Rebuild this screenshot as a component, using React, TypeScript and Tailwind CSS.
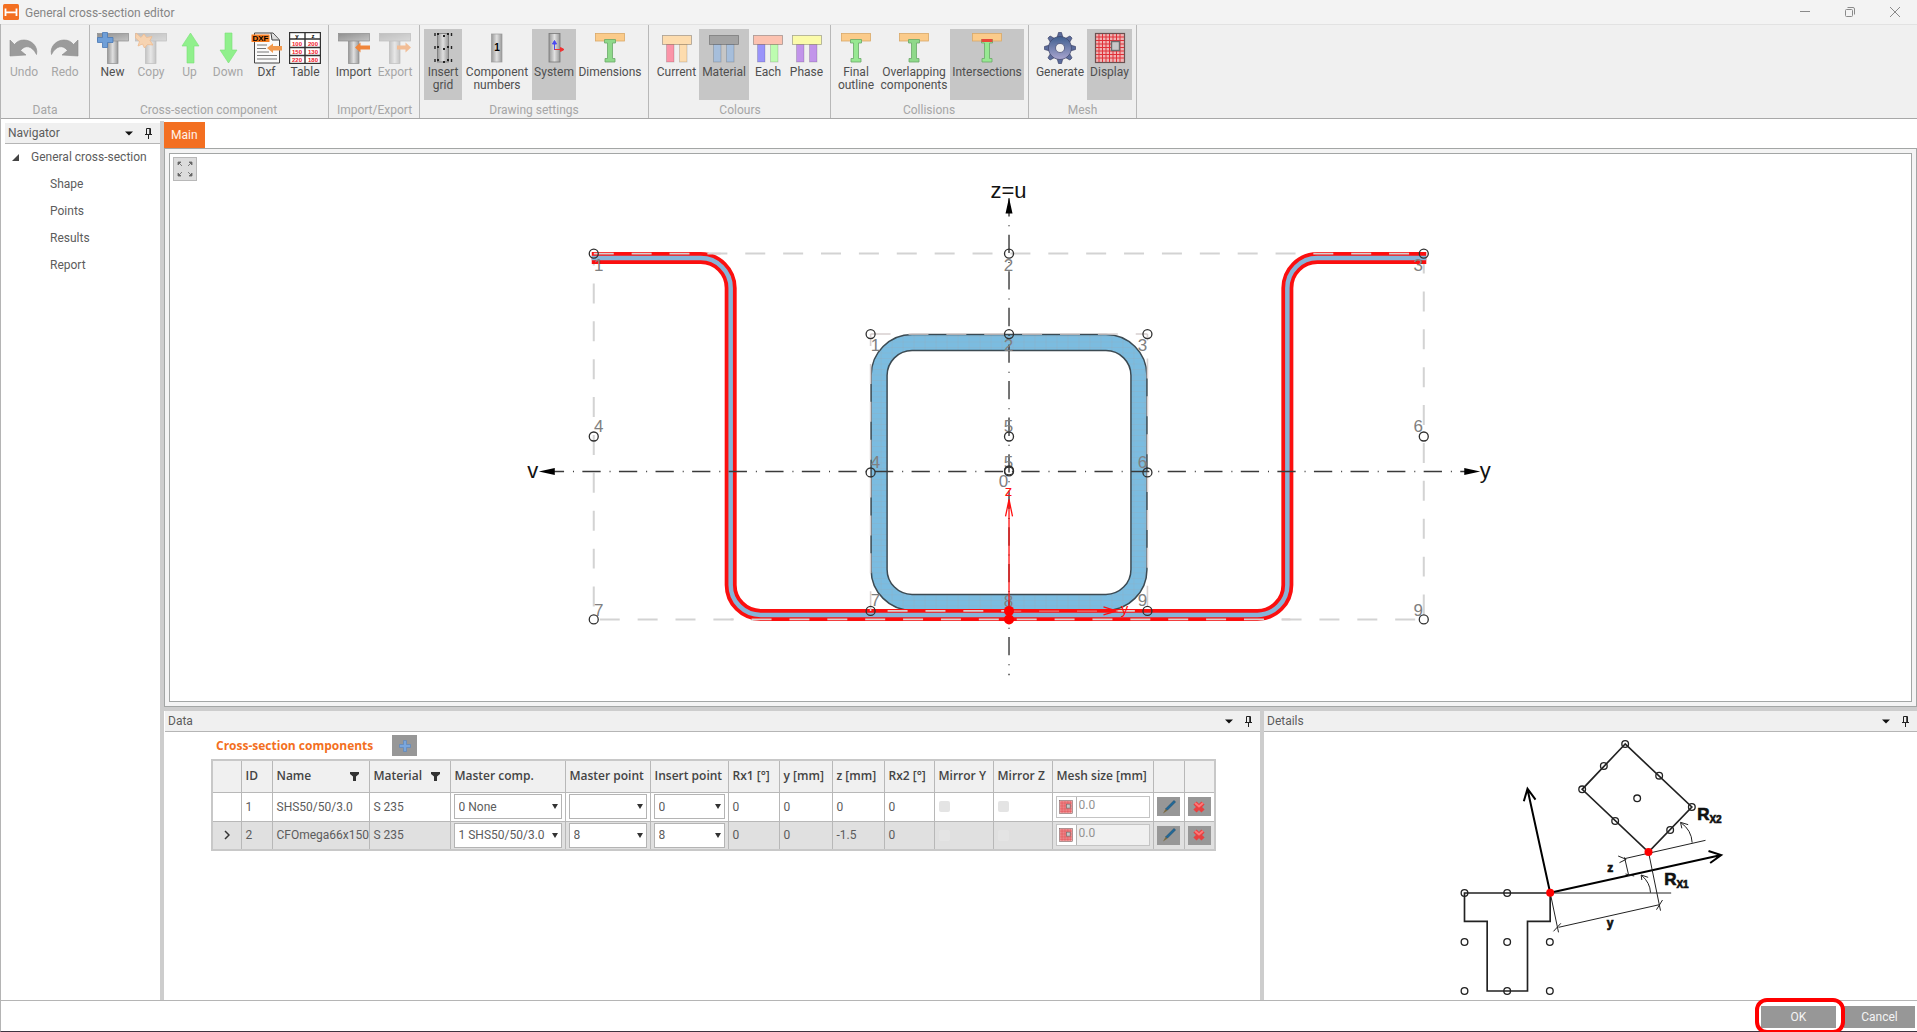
import type { ReactNode } from "react"
import { useState } from "react"
import clsx from "clsx"

const tones: Record<string, string> = {
  orange: "#fbcb8a",
  green: "#97e892",
}

function Icon({ children, faded }: { children: ReactNode; faded?: boolean }) {
  return (
    <svg viewBox="0 0 32 32" className={clsx("h-8 w-8 shrink-0", faded && "opacity-50")} aria-hidden="true">
      {children}
    </svg>
  )
}

function SteelGradient({ id }: { id: string }) {
  return (
    <linearGradient id={id} x1="0" x2="1" y1="0" y2="0">
      <stop offset="0" stopColor="#989898" />
      <stop offset="0.5" stopColor="#e0e0e0" />
      <stop offset="1" stopColor="#989898" />
    </linearGradient>
  )
}

function UndoIcon({ flip }: { flip?: boolean }) {
  return (
    <Icon>
      <path
        d="M2 8V24L18 23L12.500 18.500C17 12.500 24 13.500 28.500 22.500C30.500 14 23 8 16 8C11.500 8 9 9.500 6.500 12.500Z"
        fill="#9b9b9b"
        stroke="#8a8a8a"
        strokeWidth="0.6"
        transform={flip ? "translate(31 0) scale(-1 1)" : undefined}
      />
    </Icon>
  )
}

function TeeShape({ id }: { id: string }) {
  return (
    <>
      <defs>
        <SteelGradient id={id} />
        <linearGradient id={id + "-bar"} x1="0" x2="1" y1="0" y2="1">
          <stop offset="0" stopColor="#8f8f8f" />
          <stop offset="1" stopColor="#c4c4c4" />
        </linearGradient>
      </defs>
      <rect x="10.5" y="4" width="10.5" height="27.5" fill={`url(#${id})`} stroke="#8c8c8c" strokeWidth="0.7" />
      <rect x="0.5" y="1.500" width="31" height="7.500" fill={`url(#${id}-bar)`} stroke="#8c8c8c" strokeWidth="0.7" />
    </>
  )
}

function NewIcon() {
  return (
    <Icon>
      <TeeShape id="tee-new" />
      <path d="M5.500 0.500H10.500V5.500H16V10.500H10.500V15.500H5.500V10.500H0.500V5.500H5.500Z" fill="#6f9fd8" stroke="#4a78b5" strokeWidth="0.8" />
    </Icon>
  )
}

function CopyIcon() {
  return (
    <Icon faded>
      <TeeShape id="tee-copy" />
      <path d="M9 2L11.500 5.500L17 4.500L15 8.500L18 13L12.500 12.500L9.500 16L7.500 12L3 14L4.500 9.500L0.500 6L1 1L6 5.500Z" fill="#fdb873" stroke="#f0862e" strokeWidth="0.8" />
    </Icon>
  )
}

function VerticalArrow({ down }: { down?: boolean }) {
  return (
    <Icon>
      <path
        d="M16.500 1L25 14H20V31H13V14H8Z"
        fill="#90f08c"
        stroke="#7be077"
        strokeWidth="0.6"
        transform={down ? "rotate(180 16.5 16)" : undefined}
      />
    </Icon>
  )
}

function DxfIcon() {
  return (
    <Icon>
      <path d="M3.500 1H22L28.500 8V31H3.500Z" fill="#fafafa" stroke="#444" />
      <path d="M20 1L21 8H28" fill="#ddd" stroke="#444" />
      <path d="M6 13H16M6 16.500H15M6 20H18M6 23.500H26M6 27H26" stroke="#777" />
      <rect x="0.500" y="2.500" width="18" height="7.500" fill="#f47b20" />
      <text x="9.500" y="9" textAnchor="middle" fontSize="8" fontWeight="700" fill="#000" fontFamily="Liberation Sans, sans-serif">
        DXF
      </text>
      <path d="M16 16L22 11.500V14H31V18.500H22V21Z" fill="#f29a4e" />
    </Icon>
  )
}

function TableIcon() {
  const rows = [
    ["100", "200"],
    ["150", "130"],
    ["220", "180"],
  ]
  return (
    <Icon>
      <rect x="0.500" y="0.500" width="31" height="31" fill="#fff" stroke="#333" strokeWidth="1.400" />
      <path d="M16 0V32M0 7H32M0 15.500H32M0 23.500H32" stroke="#333" strokeWidth="1.400" />
      <g fontSize="6" fontWeight="700" textAnchor="middle" fontFamily="Liberation Sans, sans-serif">
        <text x="8" y="5.500">y</text>
        <text x="24" y="5.500">z</text>
        {rows.map(([y, z], i) => (
          <g key={y} fill="#f0202c">
            <text x="8" y={13.5 + i * 8.2}>{y}</text>
            <text x="24" y={13.5 + i * 8.2}>{z}</text>
          </g>
        ))}
      </g>
    </Icon>
  )
}

function ImportIcon({ out }: { out?: boolean }) {
  return (
    <Icon faded={out}>
      <TeeShape id={out ? "tee-export" : "tee-import"} />
      {out ? (
        <path d="M32 15.500L26.500 10.500V13.500H18V17.500H26.500V20.500Z" fill="#f58b3c" />
      ) : (
        <path d="M17 15.500L22.500 10.500V13.500H32V17.500H22.500V20.500Z" fill="#f0853a" />
      )}
    </Icon>
  )
}

function InsertGridIcon() {
  return (
    <Icon>
      <defs>
        <SteelGradient id="steel-grid" />
      </defs>
      <rect x="10.500" y="1.500" width="11" height="28.500" fill="url(#steel-grid)" stroke="#777" strokeWidth="0.8" />
      {[3, 16, 29].map((y) => (
        <path key={y} d={`M10 ${y - 2}h2v2h-2zM20 ${y - 2}h2v2h-2zM16 ${y}h2v2h-2z`} fill="#222" />
      ))}
      <path d="M8 1v3M24.500 1v3M8 14v3M24.500 14v3M8 27v3M24.500 27v3" stroke="#222" strokeWidth="1.400" />
    </Icon>
  )
}

function ComponentNumberIcon() {
  return (
    <Icon>
      <defs>
        <SteelGradient id="steel-number" />
      </defs>
      <rect x="10.500" y="2" width="10.500" height="28" fill="url(#steel-number)" stroke="#9a9a9a" strokeWidth="0.7" />
      <text x="16" y="19" textAnchor="middle" fontSize="10" fontWeight="700" fontFamily="Liberation Sans, sans-serif">
        1
      </text>
    </Icon>
  )
}

function SystemIcon() {
  return (
    <Icon>
      <defs>
        <SteelGradient id="steel-system" />
      </defs>
      <rect x="11" y="1.500" width="11" height="28.500" fill="url(#steel-system)" stroke="#777" strokeWidth="0.8" />
      <path d="M16.500 18V9.500M14.500 12L16.500 8.500L18.500 12Z" stroke="#4a4af0" fill="#4a4af0" />
      <path d="M16.500 17.500H25M22.500 15.500L26 17.500L22.500 19.500Z" stroke="#f03030" fill="#f03030" />
    </Icon>
  )
}

function BeamIcon({ hit, merged }: { hit?: boolean; merged?: boolean }) {
  return (
    <Icon>
      <rect x="1.500" y="1.500" width="29" height="7.500" fill={tones.orange} stroke="#d9a868" strokeWidth="0.8" />
      <path
        d="M10.500 7.500H21.500V11H18.500V26.500H21V30H11V26.500H13.500V11H10.500Z"
        fill={merged ? "#8fd98a" : tones.green}
        stroke="#6aa868"
        strokeWidth="0.8"
      />
      {hit && <rect x="10.500" y="7" width="11" height="3" fill="#e8483a" />}
    </Icon>
  )
}

function ColourIcon({ top, left, right }: { top: string; left: string; right: string }) {
  return (
    <Icon>
      <rect x="5.500" y="12" width="7.500" height="18" fill={left} stroke="#00000030" strokeWidth="0.8" />
      <rect x="18.500" y="12" width="7.500" height="18" fill={right} stroke="#00000030" strokeWidth="0.8" />
      <rect x="1.500" y="3.500" width="29" height="9" fill={top} stroke="#00000050" strokeWidth="0.8" />
    </Icon>
  )
}

function GearIcon() {
  return (
    <Icon>
      <defs>
        <linearGradient id="gear" x1="0" x2="0" y1="0" y2="1">
          <stop offset="0" stopColor="#3f5f8f" />
          <stop offset="1" stopColor="#a9a5cf" />
        </linearGradient>
      </defs>
      <g fill="url(#gear)" stroke="#3d4468" strokeWidth="0.7">
        {[0, 45, 90, 135, 180, 225, 270, 315].map((a) => (
          <path key={a} d="M13 6L14.500 0.500H17.500L19 6Z" fill="#5b6c9c" transform={`rotate(${a} 16 16)`} />
        ))}
        <path d="M16 4.500A11.500 11.500 0 1 1 15.900 4.500ZM16 11.500A4.500 4.500 0 1 0 16.100 11.500Z" fillRule="evenodd" />
      </g>
    </Icon>
  )
}

function MeshShape() {
  return (
    <>
      <rect x="1.500" y="1.500" width="29" height="29" fill="#f0b4b4" stroke="#6b5050" strokeWidth="1.200" />
      <path
        d="M5 2V30M8.500 2V30M12 2V30M15.500 2V30M19 2V30M22.500 2V30M26 2V30M2 5H30M2 8.500H30M2 12H30M2 15.500H30M2 19H30M2 22.500H30M2 26H30"
        stroke="#e03038"
        strokeWidth="1"
      />
      <rect x="17.500" y="9.500" width="8" height="9" fill="#c8c8c8" stroke="#6b6b6b" strokeWidth="1.400" />
    </>
  )
}

type Tool = { label: string; width: string; icon: ReactNode; disabled?: boolean; active?: boolean }
type Group = { title: string; pad: string; tools: Tool[] }

const groups: Group[] = [
  {
    title: "Data",
    pad: "px-[3px]",
    tools: [
      { label: "Undo", width: "w-[40px]", icon: <UndoIcon />, disabled: true },
      { label: "Redo", width: "w-[42px]", icon: <UndoIcon flip />, disabled: true },
    ],
  },
  {
    title: "Cross-section component",
    pad: "pl-[3px] pr-1",
    tools: [
      { label: "New", width: "w-[39px]", icon: <NewIcon /> },
      { label: "Copy", width: "w-[38px]", icon: <CopyIcon />, disabled: true },
      { label: "Up", width: "w-[39px]", icon: <VerticalArrow />, disabled: true },
      { label: "Down", width: "w-[38px]", icon: <VerticalArrow down />, disabled: true },
      { label: "Dxf", width: "w-[39px]", icon: <DxfIcon /> },
      { label: "Table", width: "w-[38px]", icon: <TableIcon /> },
    ],
  },
  {
    title: "Import/Export",
    pad: "pl-1 pr-[3px]",
    tools: [
      { label: "Import", width: "w-[41px]", icon: <ImportIcon /> },
      { label: "Export", width: "w-[42px]", icon: <ImportIcon out />, disabled: true },
    ],
  },
  {
    title: "Drawing settings",
    pad: "px-1",
    tools: [
      { label: "Insert\ngrid", width: "w-[38px]", icon: <InsertGridIcon />, active: true },
      { label: "Component\nnumbers", width: "w-[70px]", icon: <ComponentNumberIcon /> },
      { label: "System", width: "w-[44px]", icon: <SystemIcon />, active: true },
      { label: "Dimensions", width: "w-[68px]", icon: <BeamIcon merged /> },
    ],
  },
  {
    title: "Colours",
    pad: "pl-[5px] pr-1",
    tools: [
      { label: "Current", width: "w-[45px]", icon: <ColourIcon top="#fddcae" left="#fb94a8" right="#fddcae" /> },
      { label: "Material", width: "w-[50px]", icon: <ColourIcon top="#a3a3a3" left="#a6bedb" right="#a6bedb" />, active: true },
      { label: "Each", width: "w-[38px]", icon: <ColourIcon top="#fcc2b0" left="#9a94fa" right="#bdfcb0" /> },
      { label: "Phase", width: "w-[39px]", icon: <ColourIcon top="#fbfbaa" left="#c294ea" right="#c294ea" /> },
    ],
  },
  {
    title: "Collisions",
    pad: "pl-[3px] pr-1",
    tools: [
      { label: "Final\noutline", width: "w-[44px]", icon: <BeamIcon /> },
      { label: "Overlapping\ncomponents", width: "w-[72px]", icon: <BeamIcon merged /> },
      { label: "Intersections", width: "w-[74px]", icon: <BeamIcon hit />, active: true },
    ],
  },
  {
    title: "Mesh",
    pad: "px-1",
    tools: [
      { label: "Generate", width: "w-[54px]", icon: <GearIcon /> },
      { label: "Display", width: "w-[45px]", icon: <Icon><MeshShape /></Icon>, active: true },
    ],
  },
]

function TitleBar() {
  return (
    <header className="flex h-6 shrink-0 items-center bg-[#f3f3f3] pl-[3px]">
      <svg viewBox="0 0 16 16" className="h-4 w-4" aria-hidden="true">
        <rect width="16" height="16" rx="1.500" fill="#f36f21" />
        <path d="M2.500 4.500V12M13.500 4.500V12M3 8.300H13" stroke="#fff" strokeWidth="1.800" />
      </svg>
      <h1 className="ml-1.5 grow pt-0.5 text-[#858585]">General cross-section editor</h1>
      <div className="flex text-[#8a8a8a]">
        <button aria-label="Minimize" className="flex h-6 w-[45px] items-center justify-center">
          <svg viewBox="0 0 10 10" className="h-2.5 w-2.5"><path d="M0 4.500H10" stroke="currentColor" /></svg>
        </button>
        <button aria-label="Restore" className="flex h-6 w-[46px] items-center justify-center">
          <svg viewBox="0 0 10 10" className="h-2.5 w-2.5" fill="none" stroke="currentColor">
            <rect x="0.5" y="2.5" width="7" height="7" rx="1" />
            <path d="M2.5 0.5H8Q9.500 0.500 9.500 2V7.500" />
          </svg>
        </button>
        <button aria-label="Close" className="flex h-6 w-[44px] items-center justify-center">
          <svg viewBox="0 0 10 10" className="h-2.5 w-2.5"><path d="M0 0L10 10M10 0L0 10" stroke="currentColor" /></svg>
        </button>
      </div>
    </header>
  )
}

function Ribbon() {
  return (
    <div className="flex h-[95px] shrink-0 border-t border-b border-t-[#e2e2e2] border-b-[#a8a8a8] bg-[#f0f0f0]">
      {groups.map((group) => (
        <section key={group.title} className={clsx("flex flex-col border-r border-[#b8b8b8] pt-1", group.pad)}>
          <div className="flex">
            {group.tools.map((tool) => (
              <button
                key={tool.label}
                disabled={tool.disabled}
                className={clsx(
                  "flex h-[71px] flex-col items-center pt-[3px] leading-[13px] whitespace-pre",
                  tool.width,
                  tool.active && "bg-[#c6c6c6]",
                  tool.disabled ? "text-[#a6a6a6]" : "text-[#4f4f4f]",
                )}
              >
                {tool.icon}
                <span className="mt-0.5">{tool.label}</span>
              </button>
            ))}
          </div>
          <h2 className="pt-px text-center leading-[18px] text-[#a6a6a6]">{group.title}</h2>
        </section>
      ))}
    </div>
  )
}

function PaneHeader({ title }: { title: string }) {
  return (
    <div className="flex h-[21px] shrink-0 items-center border-b border-[#b5b5b5] bg-[#f0f0f0] pr-[7px] pl-[3px] text-[#5c5c5c]">
      <h2 className="grow">{title}</h2>
      <button aria-label={`${title} options`} className="mr-[11px]">
        <svg viewBox="0 0 8 5" className="h-[5px] w-2"><path d="M0 0.500H8L4 4.500Z" fill="#111" /></svg>
      </button>
      <button aria-label={`Pin ${title}`}>
        <svg viewBox="0 0 9 11" className="h-[11px] w-[9px]" fill="none" stroke="#222">
          <path d="M2.500 6.500V0.500H6.500V6.500M1 6.500H8M4.500 7V11" />
          <path d="M6 1V6" strokeWidth="1.500" />
        </svg>
      </button>
    </div>
  )
}

function Navigator() {
  return (
    <nav className="flex w-[159px] shrink-0 flex-col pt-1 pl-1">
      <PaneHeader title="Navigator" />
      <div className="flex h-[26px] items-center pl-[7px] text-[#5c5c5c]">
        <svg viewBox="0 0 7 7" className="mr-3 h-[7px] w-[7px]"><path d="M7 0V7H0Z" fill="#444" /></svg>
        <a href="#general">General cross-section</a>
      </div>
      <ul className="text-[#5c5c5c]">
        {["Shape", "Points", "Results", "Report"].map((item) => (
          <li key={item} className="flex h-[27px] items-center pl-[45px]">
            <a href={`#${item.toLowerCase()}`}>{item}</a>
          </li>
        ))}
      </ul>
    </nav>
  )
}

const CX = 1008.5
const omega = "M591 257.500H700A30 30 0 0 1 730 287.500V584.500A30 30 0 0 0 760 614.500H1257A30 30 0 0 0 1287 584.500V287.500A30 30 0 0 1 1317 257.500H1426"

const nodes = [
  [593, 253], [CX, 253], [1423.5, 253], [593, 436], [CX, 436], [1423.5, 436], [593, 619], [1423.5, 619],
  [870, 333.5], [CX, 333.5], [1147, 333.5], [870, 472], [CX, 471], [CX, 470], [1147, 472], [870, 610.5], [1147, 610.5],
]

const nodeLabels: [string, number, number][] = [
  ["1", 598, 270], ["2", 1008, 270], ["3", 1418, 270],
  ["4", 598, 432], ["5", 1008, 432], ["6", 1418, 432],
  ["7", 598, 616], ["8", 1008, 607], ["9", 1418, 616],
  ["1", 875, 350], ["2", 1008, 350], ["3", 1142, 350],
  ["4", 875, 468], ["5", 1008, 468], ["6", 1142, 468],
  ["7", 875, 606], ["9", 1142, 606], ["0", 1003, 487],
]

function SectionDrawing() {
  return (
    <svg viewBox="169 154 1742 546" className="h-full w-full" fontFamily="Liberation Sans, Arial, sans-serif" role="img" aria-label="Cross-section">
      <defs>
        <pattern id="mesh" width="11" height="5.500" patternUnits="userSpaceOnUse">
          <path d="M0 0H11M0 0V5.500" stroke="#9aa6ae" strokeWidth="0.700" fill="none" opacity="0.600" />
        </pattern>
      </defs>

      <g fill="none" stroke="#d3d3d3" strokeWidth="2" strokeDasharray="20 17.900">
        <path d="M593 253H1423.500" />
        <path d="M593 253V619" strokeDashoffset="8" />
        <path d="M1423.500 253V619" />
        <path d="M599 619H1423.500" />
      </g>

      {/* square hollow section */}
      <rect x="878.5" y="342" width="260" height="260" rx="33" fill="none" stroke="#7bbce0" strokeWidth="16" />
      <rect x="878.5" y="342" width="260" height="260" rx="33" fill="none" stroke="url(#mesh)" strokeWidth="16" />
      <rect x="870.5" y="334" width="276" height="276" rx="41" fill="none" stroke="#3c4a52" strokeWidth="1.500" />
      <rect x="886.5" y="350" width="244" height="244" rx="25" fill="none" stroke="#3c4a52" strokeWidth="1.500" />

      {/* omega profile */}
      <path d={omega} fill="none" stroke="#fb0f0f" strokeWidth="12" />
      <path d={omega} fill="none" stroke="#86b4d8" strokeWidth="4.500" />

      <g fill="none" stroke="#d8d0d0" strokeWidth="1.600" strokeDasharray="20 17.900">
        <path d="M593 253H720" />
        <path d="M1313 253H1423.500" />
        <path d="M730 619H1290" strokeDashoffset="17" />
        <path d="M870 333.500H1147" />
        <path d="M870 333.500V610.500" strokeDashoffset="8" />
        <path d="M1147 333.500V610.500" strokeDashoffset="13.500" />
        <path d="M887 610.500H1147" />
      </g>

      {/* principal axes */}
      <g stroke="#3a3a3a" strokeWidth="1.400" strokeDasharray="18.300 8.900 1 8.400">
        <path d="M1008.500 197.500V675" />
        <path d="M545 471H1474" />
      </g>
      <path d="M1008.500 197L1012 213H1005ZM538 471L554 467.500V474.500ZM1480 471L1464 467.500V474.500Z" fill="#000" />
      <g fontSize="22" textAnchor="middle" fill="#111">
        <text x="1008" y="197">z=u</text>
        <text x="532" y="478">v</text>
        <text x="1485" y="478">y</text>
      </g>

      <g fontSize="17" textAnchor="middle" fill="#808080">
        {nodeLabels.map(([label, x, y], i) => (
          <text key={i} x={x} y={y}>{label}</text>
        ))}
      </g>
      <g fill="none" stroke="#2f2f2f" strokeWidth="1.300">
        {nodes.map(([x, y], i) => (
          <circle key={i} cx={x} cy={y} r="4.500" />
        ))}
      </g>

      {/* local axes */}
      <g fill="none" stroke="#ff1010" strokeWidth="1.300">
        <path d="M1008.500 610.500V499M1005 516L1008.500 499L1012 516" />
        <path d="M1008.500 610.500H1116M1103 606.500L1116 610.500L1103 614.500" />
      </g>
      <circle cx={CX} cy="610.5" r="5" fill="#ff0000" />
      <circle cx={CX} cy="619" r="5" fill="#ff0000" />
      <g fontSize="15" textAnchor="middle" fill="#ff1010">
        <text x="1008" y="496">z</text>
        <text x="1124" y="614">y</text>
      </g>
    </svg>
  )
}

function DetailsDrawing() {
  const plain = [[105, 579], [233, 579], [105, 726], [233, 726], [361, 726], [105, 873], [233, 873], [361, 873]]
  const rotated = [[587, 132], [523, 198], [458, 268], [557, 363], [623, 295], [689, 227], [787, 321], [722, 390]]
  return (
    <svg viewBox="-495 96 1956 804" className="h-full w-full" fill="none" stroke="#222" fontFamily="Liberation Sans, Arial, sans-serif" role="img" aria-label="Component placement">
      <path d="M105 579H362V664H294V873H173V664H105Z" strokeWidth="5" />
      <path d="M587 132L458 268L657 456L787 321Z" strokeWidth="5" />
      <g strokeWidth="4">
        {plain.concat(rotated).map(([x, y], i) => (
          <circle key={i} cx={x} cy={y} r="10" />
        ))}
      </g>
      <g stroke="#000" strokeWidth="6">
        <path d="M362 578L294 268M283 304L294 266L318 299" />
        <path d="M362 578L872 466M837 453L875 465L842 489" />
      </g>
      <g strokeWidth="3">
        <path d="M362 579H725M362 578L387 697M657 456L693 632M387 682L690 614M372 694L394 670M681 629L699 600" />
        <path d="M585 476L828 421M585 472L598 528M566 468L590 478L570 488M588 522L614 528" />
        <path d="M663 578Q662 548 636 526M637 540L635 525L656 532" />
        <path d="M788 428Q786 390 754 368M757 385L753 367L776 374" />
      </g>
      <circle cx="362" cy="578" r="12" fill="#ff0000" stroke="none" />
      <circle cx="657" cy="456" r="12" fill="#ff0000" stroke="none" />
      <g fill="#111" stroke="#111" strokeWidth="2" fontWeight="700">
        <text x="803" y="360" fontSize="51">R<tspan dy="9" fontSize="30">X2</tspan></text>
        <text x="704" y="554" fontSize="51">R<tspan dy="9" fontSize="30">X1</tspan></text>
        <text x="533" y="517" fontSize="36">z</text>
        <text x="532" y="682" fontSize="36">y</text>
      </g>
    </svg>
  )
}

function Dropdown({ label, value, options }: { label: string; value: string; options: string[] }) {
  return (
    <div className="relative mx-[3px]">
      <select
        aria-label={label}
        defaultValue={value}
        className="block h-[25px] w-full appearance-none border border-[#b4b4b4] bg-white pl-1 text-[#5c5c5c] outline-none"
      >
        {options.map((option) => (
          <option key={option}>{option}</option>
        ))}
      </select>
      <svg viewBox="0 0 6 5" className="pointer-events-none absolute top-[10px] right-1 h-[5px] w-1.5">
        <path d="M0 0H6L3 5Z" fill="#333" />
      </svg>
    </div>
  )
}

const columns = [
  ["", "w-[29px]"], ["ID", "w-[31px]"], ["Name", "w-[97px]"], ["Material", "w-[81px]"], ["Master comp.", "w-[115px]"],
  ["Master point", "w-[85px]"], ["Insert point", "w-[78px]"], ["Rx1 [°]", "w-[51px]"], ["y [mm]", "w-[53px]"],
  ["z [mm]", "w-[52px]"], ["Rx2 [°]", "w-[50px]"], ["Mirror Y", "w-[59px]"], ["Mirror Z", "w-[59px]"],
  ["Mesh size [mm]", "w-[101px]"], ["", "w-[31px]"], ["", "w-[31px]"],
]

const components = [
  { id: 1, name: "SHS50/50/3.0", material: "S 235", master: "0 None", masterPoint: "", insertPoint: "0", y: "0", z: "0" },
  { id: 2, name: "CFOmega66x150", material: "S 235", master: "1 SHS50/50/3.0", masterPoint: "8", insertPoint: "8", y: "0", z: "-1.5" },
]

const points = ["", "0", "1", "2", "3", "4", "5", "6", "7", "8", "9"]

function ComponentsTable() {
  const [selected, setSelected] = useState(2)
  return (
    <table className="w-[1003px] table-fixed border-collapse border-2 border-[#c8c8c8] text-left text-[#5c5c5c]">
      <thead>
        <tr className="h-8 bg-[#f0f0f0] font-['Open_Sans',sans-serif] text-[#444]">
          {columns.map(([name, width], i) => (
            <th key={i} className={clsx("border border-[#b8b8b8] pl-1 font-semibold whitespace-nowrap", width)}>
              <div className="flex items-center justify-between">
                {name}
                {(name === "Name" || name === "Material") && (
                  <button aria-label={`Filter ${name}`} className="mr-2.5">
                    <svg viewBox="0 0 9 9" className="h-[9px] w-[9px]"><path d="M0 0H9V2L6 4.500V9H3V4.500L0 2Z" fill="#333" /></svg>
                  </button>
                )}
              </div>
            </th>
          ))}
        </tr>
      </thead>
      <tbody>
        {components.map((row) => {
          const active = row.id === selected
          const cell = "border border-[#b8b8b8] pl-1 whitespace-nowrap"
          return (
            <tr key={row.id} className={clsx("h-[29px]", active && "bg-[#e0e0e0]")} onClick={() => setSelected(row.id)}>
              <td className={cell}>
                {active && (
                  <svg viewBox="0 0 6 10" className="ml-[7px] h-2.5 w-1.5"><path d="M1 1L5 5L1 9" fill="none" stroke="#333" strokeWidth="1.500" /></svg>
                )}
              </td>
              <td className={cell}>{row.id}</td>
              <td className={cell}>{row.name}</td>
              <td className={cell}>{row.material}</td>
              <td className="border border-[#b8b8b8]">
                <Dropdown label="Master component" value={row.master} options={["0 None", "1 SHS50/50/3.0"]} />
              </td>
              <td className="border border-[#b8b8b8]">
                <Dropdown label="Master point" value={row.masterPoint} options={points} />
              </td>
              <td className="border border-[#b8b8b8]">
                <Dropdown label="Insert point" value={row.insertPoint} options={points} />
              </td>
              <td className={cell}>0</td>
              <td className={cell}>{row.y}</td>
              <td className={cell}>{row.z}</td>
              <td className={cell}>0</td>
              {["Mirror Y", "Mirror Z"].map((label) => (
                <td key={label} className={cell}>
                  <input type="checkbox" disabled aria-label={label} className="block h-[11px] w-[11px] appearance-none rounded-xs bg-[#e4e4e4]" />
                </td>
              ))}
              <td className="border border-[#b8b8b8] px-[3px]">
                <div className="flex h-[22px] border border-[#c4c4c4]">
                  <button aria-label="Default mesh size" className="flex w-5 shrink-0 items-center justify-center border-r border-[#b4b4b4] bg-white">
                    <svg viewBox="0 0 32 32" className="h-3.5 w-3.5"><MeshShape /></svg>
                  </button>
                  <input
                    disabled
                    defaultValue="0.0"
                    aria-label="Mesh size"
                    className={clsx("w-full min-w-0 pb-1 pl-0.5 text-[#929292]", active ? "bg-[#f0f0f0]" : "bg-white")}
                  />
                </div>
              </td>
              <td className="border border-[#b8b8b8]">
                <button aria-label="Edit" className="mx-auto flex h-[19px] w-[23px] items-center justify-center bg-[#979797]">
                  <svg viewBox="0 0 14 14" className="h-3.5 w-3.5">
                    <path d="M12 0.500L13.500 2L5.500 10L3.500 9Z" fill="#1f6a9c" stroke="#1c4a6c" strokeWidth="0.600" />
                    <path d="M3.500 9L5.500 10.500L1 13.500Z" fill="#7a6a40" />
                  </svg>
                </button>
              </td>
              <td className="border border-[#b8b8b8]">
                <button aria-label="Delete" className="mx-auto flex h-[19px] w-[23px] items-center justify-center bg-[#979797]">
                  <svg viewBox="0 0 14 14" className="h-3.5 w-3.5">
                    <path d="M3 3L11 11M11 3L3 11" stroke="#e84040" strokeWidth="4.500" />
                    <path d="M3 3L7 6.500L11 3" stroke="#f77" strokeWidth="2" fill="none" />
                  </svg>
                </button>
              </td>
            </tr>
          )
        })}
      </tbody>
    </table>
  )
}

function DataPane() {
  return (
    <section className="flex min-w-0 grow flex-col pl-px">
      <PaneHeader title="Data" />
      <div className="pl-[46px]">
        <div className="flex h-[27px] items-center pl-[5px]">
          <h3 className="w-[176px] font-['Open_Sans',sans-serif] font-bold text-[#f36f21]">Cross-section components</h3>
          <button aria-label="Add component" className="flex h-[21px] w-[25px] items-center justify-center bg-[#979797]">
            <svg viewBox="0 0 12 12" className="h-3 w-3"><path d="M4.500 0.500H7.500V4.500H11.500V7.500H7.500V11.500H4.500V7.500H0.500V4.500H4.500Z" fill="#7aa6dc" stroke="#5d86bd" strokeWidth="0.700" /></svg>
          </button>
        </div>
        <ComponentsTable />
      </div>
    </section>
  )
}

export default function App() {
  return (
    <div className="flex h-screen flex-col overflow-hidden bg-white font-['Roboto','Open_Sans',sans-serif] text-[12px] leading-4">
      <TitleBar />
      <div className="flex min-h-0 grow flex-col border-b border-l border-b-[#3c3440] border-l-[#b4b4b4]">
        <Ribbon />
        <div className="flex min-h-0 grow">
          <Navigator />
          <div className="mt-[2px] w-1 shrink-0 bg-[#cdcdcd]" />
          <main className="flex min-w-0 grow flex-col pt-[2px]">
            <div className="flex h-[27px] shrink-0 items-end" role="tablist">
              <button role="tab" aria-selected="true" className="h-[26px] bg-[#f36f21] px-[7px] text-[#fff3ea]">Main</button>
            </div>
            <div className="min-h-0 grow border border-[#a3a6a5] bg-[#f4f4f4] p-1">
              <div className="relative h-full border border-[#a3a6a5] bg-white">
                <SectionDrawing />
                <button aria-label="Zoom to fit" className="absolute top-[3px] left-[3px] flex h-6 w-6 items-center justify-center border border-[#b8b8b8] bg-[#dcdcdc]">
                  <svg viewBox="0 0 16 16" className="h-4 w-4" stroke="#666" fill="#666">
                    <path d="M1 1H4L1 4ZM2 2L5 5M15 1H12L15 4ZM14 2L11 5M1 15H4L1 12ZM2 14L5 11M15 15H12L15 12ZM14 14L11 11" strokeWidth="0.800" />
                  </svg>
                </button>
              </div>
            </div>
            <div className="h-1 shrink-0 bg-[#cdcdcd]" />
            <div className="flex h-[289px] shrink-0">
              <DataPane />
              <div className="w-1 shrink-0 bg-[#cdcdcd]" />
              <section className="flex w-[653px] shrink-0 flex-col">
                <PaneHeader title="Details" />
                <div className="min-h-0 grow">
                  <DetailsDrawing />
                </div>
              </section>
            </div>
          </main>
        </div>
        <footer className="flex h-[31px] shrink-0 justify-end gap-2 border-t border-[#b5b5b5] pt-[5px] pr-0.5 text-[#f4f4f4]">
          <div className="relative">
            <button className="h-[22px] w-[75px] bg-[#979797]">OK</button>
            <div className="pointer-events-none absolute -top-2 -left-1.5 h-9 w-[90px] rounded-xl border-4 border-[#ff0000]" />
          </div>
          <button className="h-[22px] w-[71px] bg-[#979797]">Cancel</button>
        </footer>
      </div>
    </div>
  )
}
